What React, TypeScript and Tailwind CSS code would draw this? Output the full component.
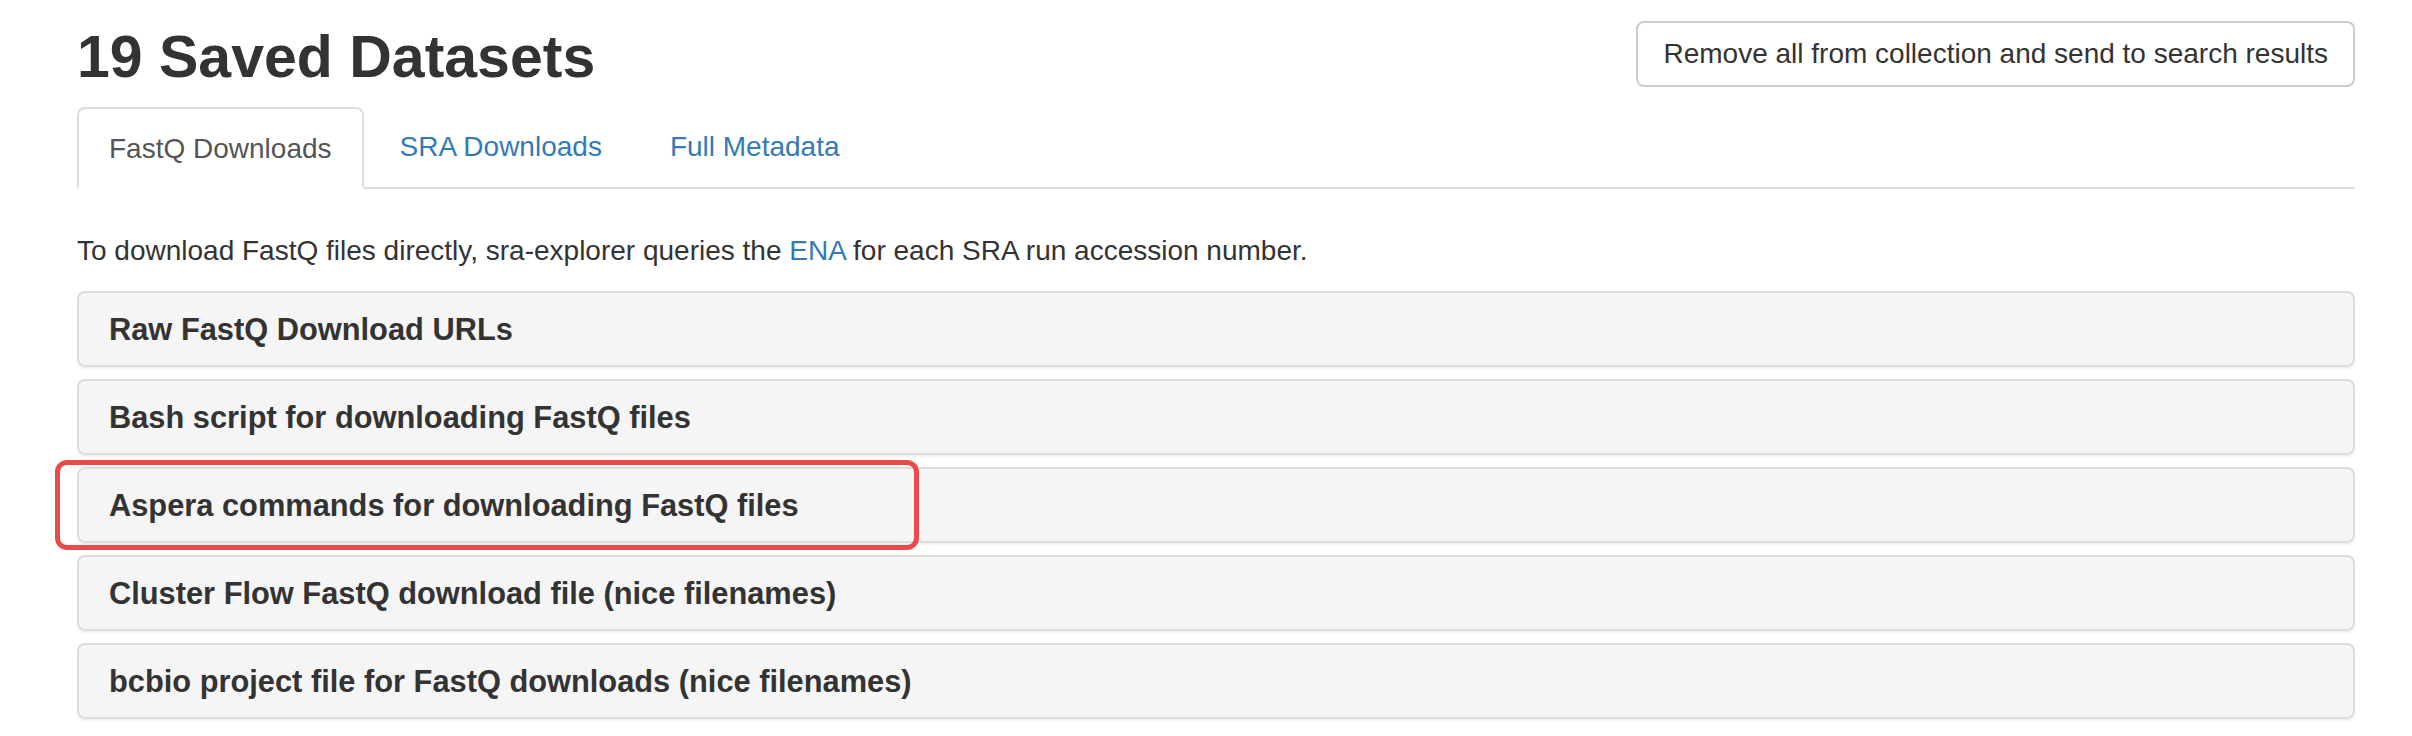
const PANELS = [
  'Raw FastQ Download URLs',
  'Bash script for downloading FastQ files',
  'Aspera commands for downloading FastQ files',
  'Cluster Flow FastQ download file (nice filenames)',
  'bcbio project file for FastQ downloads (nice filenames)',
];

const TABS = ['FastQ Downloads', 'SRA Downloads', 'Full Metadata'];

export default function App() {
  return (
    <div className="min-h-[736px] bg-white font-['Liberation_Sans',Arial,sans-serif] text-[#333]">
      <div className="ml-[77px] w-[2278px] pt-[21px]">
        {/* header */}
        <div className="flex items-start justify-between">
          <h1 className="mt-[3px] text-[59px] leading-[66px] font-bold">19 Saved Datasets</h1>
          <button className="flex h-[66px] items-center rounded-[8px] border-2 border-[#ccc] bg-white px-[25px] text-[28px] text-[#333]">
            Remove all from collection and send to search results
          </button>
        </div>

        {/* tabs */}
        <ul className="mt-[17px] flex border-b-2 border-[#ddd]">
          {TABS.map((tab, i) =>
            i === 0 ? (
              <li
                key={tab}
                className="-mb-[2px] mr-[4px] h-[82px] rounded-t-[8px] border-2 border-[#ddd] border-b-white bg-white px-[30px] pt-[20px] text-[28px] leading-[40px] text-[#555]"
              >
                {tab}
              </li>
            ) : (
              <li
                key={tab}
                className="mr-[4px] h-[80px] border-2 border-transparent px-[30px] pt-[18px] text-[28px] leading-[40px] text-[#337ab7]"
              >
                {tab}
              </li>
            )
          )}
        </ul>

        {/* tab content */}
        <p className="mt-[42px] mb-[20px] text-[28px] leading-[40px]">
          To download FastQ files directly, sra-explorer queries the{' '}
          <span className="text-[#337ab7]">ENA</span> for each SRA run accession number.
        </p>

        <div className="flex flex-col gap-[12px]">
          {PANELS.map((title, i) => (
            <div key={title} className="relative">
              <div className="flex h-[76px] items-center rounded-[8px] border-2 border-[#ddd] bg-[#f5f5f5] px-[30px] pt-[3px] shadow-[0_2px_2px_rgba(0,0,0,0.05)]">
                <span className="text-[30.8px] font-bold text-[#333]">{title}</span>
              </div>
              {i === 2 && (
                <div className="pointer-events-none absolute -left-[22px] -top-[7px] h-[90px] w-[864px] rounded-[12px] border-[5px] border-[#e94b4b]" />
              )}
            </div>
          ))}
        </div>
      </div>
    </div>
  );
}
